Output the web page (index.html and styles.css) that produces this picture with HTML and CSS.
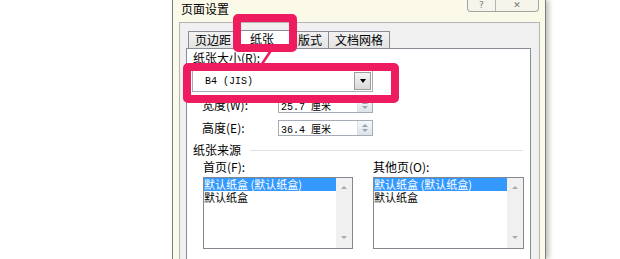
FILE: index.html
```html
<!DOCTYPE html>
<html lang="zh-CN">
<head>
  <meta charset="UTF-8" />
  <title>页面设置</title>
  <link rel="stylesheet" href="styles.css">
</head>
<body>

  <div class="dialog">
    <div class="titlebar">
      <span class="title">页面设置</span>
      <div class="caption-buttons">
        <span class="cap-btn help">?</span>
        <span class="cap-btn close">✕</span>
      </div>
    </div>

    <div class="client">
      <div class="tabs">
        <span class="tab">页边距</span>
        <span class="tab active">纸张</span>
        <span class="tab">版式</span>
        <span class="tab">文档网格</span>
      </div>

      <div class="panel">
        <div class="label size-label">纸张大小(<u>R</u>):</div>
        <div class="select">
          <span class="select-text">B4 (JIS)</span>
          <span class="drop-btn"><span class="tri-down"></span></span>
        </div>

        <div class="field-row first">
          <span class="field-label">宽度(<u>W</u>):</span>
          <div class="spin">
            <span class="spin-text">25.7 厘米</span>
            <span class="spin-btn"><span class="up"></span><span class="down"></span></span>
          </div>
        </div>
        <div class="field-row">
          <span class="field-label">高度(<u>E</u>):</span>
          <div class="spin">
            <span class="spin-text">36.4 厘米</span>
            <span class="spin-btn"><span class="up"></span><span class="down"></span></span>
          </div>
        </div>

        <div class="group-title">
          <span>纸张来源</span>
          <span class="group-line"></span>
        </div>

        <div class="sources">
          <div class="source">
            <div class="label">首页(<u>F</u>):</div>
            <div class="listbox">
              <div class="items">
                <div class="item selected">默认纸盒 (默认纸盒)</div>
                <div class="item">默认纸盒</div>
              </div>
              <div class="scroll"><span class="s-up"></span><span class="s-down"></span></div>
            </div>
          </div>
          <div class="source">
            <div class="label">其他页(<u>O</u>):</div>
            <div class="listbox">
              <div class="items">
                <div class="item selected">默认纸盒 (默认纸盒)</div>
                <div class="item">默认纸盒</div>
              </div>
              <div class="scroll"><span class="s-up"></span><span class="s-down"></span></div>
            </div>
          </div>
        </div>
      </div>
    </div>
  </div>

  <!-- pink annotation marks drawn over the dialog -->
  <div class="mark mark-tab"></div>
  <div class="mark mark-size"></div>
  <svg class="mark-link" width="20" height="20" viewBox="0 0 20 20">
    <line x1="14" y1="2" x2="6" y2="14" stroke="#ee1c5e" stroke-width="2.5" stroke-linecap="round"/>
  </svg>

</body>
</html>
```

FILE: styles.css
```css
* {
  box-sizing: border-box;
}

body {
  margin: 0;
  width: 620px;
  height: 259px;
  overflow: hidden;
  background: #fff;
  position: relative;
  font-family: "Noto Sans CJK SC", sans-serif;
  font-size: 12px;
  color: #000;
}

u {
  text-decoration: none;
}

.dialog {
  margin-left: 172px;
  width: 374px;
  height: 259px;
  overflow: hidden;
  background: #fbfae9;
  border: 1px solid #7d7d7d;
  border-top: none;
  border-bottom: none;
  box-shadow: 3px 0 5px rgba(0, 0, 0, 0.25);
}

.titlebar {
  height: 22px;
  display: flex;
  justify-content: space-between;
  align-items: flex-start;
  padding-left: 8px;
  padding-right: 6px;
}

.title {
  line-height: 16px;
  margin-top: 1px;
}

.caption-buttons {
  display: flex;
  height: 12px;
  border: 1px solid #a3a3a3;
  border-top: none;
  border-radius: 0 0 4px 4px;
  background: #f6f5ec;
}

.cap-btn {
  display: flex;
  align-items: center;
  justify-content: center;
  font-family: "DejaVu Sans", sans-serif;
  font-size: 9px;
  line-height: 11px;
  color: #777;
}

.help {
  width: 28px;
  border-right: 1px solid #b5b5b5;
}

.close {
  width: 42px;
}

.client {
  margin: 0 5px 0 6px;
  height: 237px;
  background: #f0f0f0;
  border: 1px solid #b4b4b4;
  border-bottom: none;
  padding: 8px 8px 0 6px;
}

.tabs {
  display: flex;
  padding-left: 2px;
  height: 17px;
  align-items: flex-end;
}

.tab {
  height: 17px;
  line-height: 16px;
  padding: 0 6px;
  border: 1px solid #898c95;
  border-bottom: none;
  margin-right: -1px;
  background: linear-gradient(#f2f2f2, #e3e3e3);
  font-size: 12px;
}

.tab.active {
  background: #fff;
  height: 19px;
  padding: 0 17px 0 12px;
  position: relative;
  z-index: 1;
  margin-bottom: -1px;
}

.panel {
  height: 211px;
  background: #fff;
  border: 1px solid #898c95;
  border-bottom: none;
  padding: 2px 5px 0 5px;
}

.label {
  line-height: 14px;
}

.size-label {
  padding-left: 1px;
}

.select {
  margin-top: 5px;
  width: 181px;
  height: 22px;
  border: 1px solid #a5acb5;
  display: flex;
  align-items: center;
  justify-content: space-between;
  padding: 0 1px 0 12px;
}

.select-text,
.spin-text {
  font-family: "Liberation Mono", monospace;
  font-size: 10px;
  white-space: pre;
}

.drop-btn {
  width: 17px;
  height: 18px;
  border: 1px solid #9c9c9c;
  background: linear-gradient(#f4f4f4, #d9d9d9);
  display: flex;
  align-items: center;
  justify-content: center;
}

.tri-down {
  width: 0;
  height: 0;
  border-left: 3.5px solid transparent;
  border-right: 3.5px solid transparent;
  border-top: 4px solid #000;
}

.field-row {
  display: flex;
  align-items: center;
  height: 16px;
  margin-top: 7px;
}

.field-row.first {
  margin-top: 5px;
}

.field-label {
  width: 86px;
  padding-left: 10px;
  line-height: 14px;
}

.spin {
  width: 95px;
  height: 16px;
  border: 1px solid #a5acb5;
  display: flex;
  align-items: center;
  justify-content: space-between;
  padding-left: 2px;
}

.spin-text {
  font-family: "Liberation Mono", "Noto Sans CJK SC", monospace;
}

.spin-btn {
  width: 15px;
  height: 14px;
  background: linear-gradient(#f5f7fa, #dfe4ea);
  border-left: 1px solid #dbe0e6;
  display: flex;
  flex-direction: column;
  align-items: center;
  justify-content: center;
  gap: 2px;
}

.spin-btn .up {
  border-left: 3px solid transparent;
  border-right: 3px solid transparent;
  border-bottom: 3px solid #9aa4b3;
}

.spin-btn .down {
  border-left: 3px solid transparent;
  border-right: 3px solid transparent;
  border-top: 3px solid #9aa4b3;
}

.group-title {
  display: flex;
  align-items: center;
  margin-top: 7px;
  padding-left: 1px;
  line-height: 14px;
  margin-right: 2px;
}

.group-line {
  flex: 1;
  height: 1px;
  background: #dde2e7;
  margin-left: 9px;
}

.sources {
  display: flex;
  gap: 20px;
  padding-left: 11px;
  margin-top: 3px;
}

.source .label {
  line-height: 14px;
}

.listbox {
  margin-top: 3px;
  width: 151px;
  height: 72px;
  border: 1px solid #828790;
  display: flex;
}

.source:first-child .listbox {
  width: 150px;
}

.items {
  flex: 1;
}

.item {
  height: 13px;
  line-height: 13px;
  font-size: 11px;
  white-space: nowrap;
}

.item.selected {
  background: #3399ff;
  color: #fff;
}

.scroll {
  width: 16px;
  background: #f0f0f0;
  display: flex;
  flex-direction: column;
  align-items: center;
  justify-content: space-between;
  padding: 8px 0 9px;
}

.s-up {
  border-left: 3px solid transparent;
  border-right: 3px solid transparent;
  border-bottom: 3px solid #a9a9a9;
}

.s-down {
  border-left: 3px solid transparent;
  border-right: 3px solid transparent;
  border-top: 3px solid #a9a9a9;
}

.mark {
  position: absolute;
  border: 8px solid #ee1c5e;
  border-radius: 5px;
  z-index: 5;
}

.mark-tab {
  left: 233px;
  top: 14px;
  width: 64px;
  height: 38px;
}

.mark-size {
  left: 183px;
  top: 63px;
  width: 216px;
  height: 40px;
}

.mark-link {
  position: absolute;
  left: 256px;
  top: 50px;
  z-index: 6;
}
```
